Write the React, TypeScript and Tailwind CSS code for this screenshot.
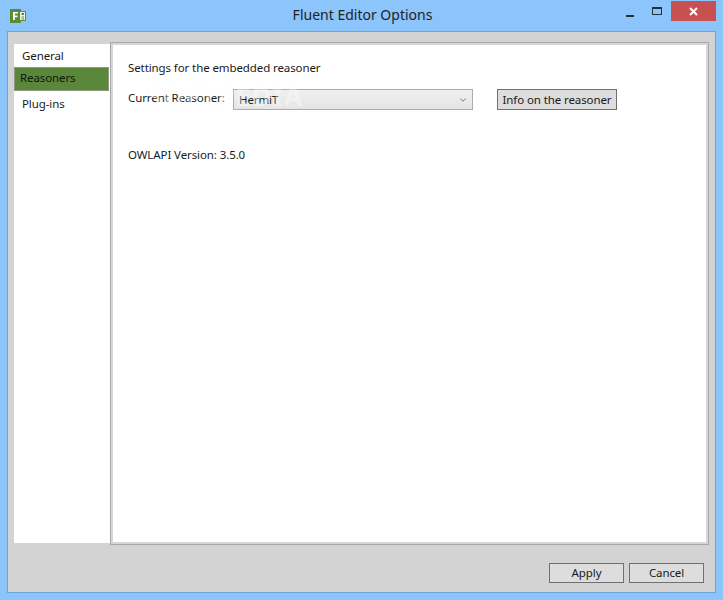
import { ChevronDown } from 'lucide-react';

const sections = ['General', 'Reasoners', 'Plug-ins'];

function FluentIcon() {
  return (
    <svg width="16" height="14" viewBox="0 0 16 14">
      <rect x="0" y="0" width="11" height="14" fill="#5b8a3a" />
      <rect x="9.5" y="2.5" width="6" height="9" fill="#eef3e8" stroke="#5b8a3a" />
      <path d="M3 3h5v1.6H4.8v2H7.5v1.6H4.8V11H3z" fill="#fff" />
      <rect x="11.5" y="4" width="2.5" height="2" fill="#5b8a3a" />
      <rect x="11.5" y="7.5" width="2.5" height="1" fill="#5b8a3a" />
      <rect x="11.5" y="9.5" width="2.5" height="1" fill="#5b8a3a" />
    </svg>
  );
}

function WindowControls() {
  return (
    <div className="flex items-start">
      <div className="flex h-[21px] w-[26px] items-end justify-center pb-[5px]">
        <div className="h-[2px] w-[8px] bg-[#26303a]" />
      </div>
      <div className="ml-[1px] flex h-[21px] w-[26px] items-start justify-center pt-[6px]">
        <div className="h-[8px] w-[10px] border border-t-2 border-[#26303a]" />
      </div>
      <div className="ml-[1px] flex h-[20px] w-[45px] items-center justify-center bg-[#c75050]">
        <svg width="9" height="9" viewBox="0 0 9 9">
          <path d="M1 1l7 7M8 1L1 8" stroke="#fff" strokeWidth="2" />
        </svg>
      </div>
    </div>
  );
}

export default function App() {
  return (
    <div className="flex h-[600px] w-[723px] flex-col overflow-hidden bg-[#8cc5fb] font-['Noto_Sans',sans-serif] text-[11.5px] tracking-[-0.1px] text-[#1a1a1a]">
      {/* Title bar */}
      <div className="flex h-[31px] shrink-0 items-start pl-[10px] pr-[7px]">
        <div className="mt-[9px]">
          <FluentIcon />
        </div>
        <div className="mt-[5px] flex-1 pl-[82px] text-center text-[14px] leading-[20px] tracking-normal text-[#222]">
          Fluent Editor Options
        </div>
        <div className="mt-[1px]">
          <WindowControls />
        </div>
      </div>

      {/* Client area */}
      <div className="mx-[7px] mb-[7px] flex min-h-0 flex-1 flex-col border border-[#6fa3d8] bg-[#d3d3d3] px-[6px] pt-[10px]">
        <div className="flex h-[503px] shrink-0">
          {/* Sidebar */}
          <div className="my-[2px] flex w-[96px] flex-col bg-white pr-[1px] pt-[2px]">
            {sections.map((name) =>
              name === 'Reasoners' ? (
                <div
                  key={name}
                  className="mb-[3px] mt-[-1px] h-[24px] border border-[#8a9a80] bg-[#5a873a] pl-[5px] leading-[20px] text-[#10180a]"
                >
                  {name}
                </div>
              ) : (
                <div key={name} className="mb-[2px] h-[20px] pl-[8px] leading-[20px]">
                  {name}
                </div>
              )
            )}
          </div>

          {/* Panel */}
          <div className="relative flex-1 border border-[#a8a8a8]">
            <div className="h-full border-2 border-[#d6d6d6] bg-white px-[15px] pt-[15px]">
              <div className="leading-[16px]">Settings for the embedded reasoner</div>
              <div className="mt-[13px] flex items-start">
                <span className="mt-[1px] w-[105px] leading-[16px]">Current Reasoner:</span>
                <div className="flex h-[21px] w-[240px] items-center justify-between border border-[#acacac] bg-gradient-to-b from-[#f0f0f0] to-[#e5e5e5] pl-[5px] pr-[4px]">
                  <span>HermiT</span>
                  <ChevronDown className="h-[10px] w-[10px] text-[#606060]" strokeWidth={2} />
                </div>
                <button className="ml-[24px] h-[21px] w-[120px] border border-[#707070] bg-[#dddddd] text-center leading-[19px]">
                  Info on the reasoner
                </button>
              </div>
              <div className="mt-[37px] leading-[16px]">OWLAPI Version: 3.5.0</div>
            </div>
            <div className="pointer-events-none absolute left-[36px] top-[38px] select-none text-[27px] font-bold leading-[30px] tracking-[1px] text-white opacity-35 [text-shadow:0_0_1px_#e8e8e8]">
              SOFTPEDIA
            </div>
          </div>
        </div>

        {/* Footer */}
        <div className="mt-[18px] flex justify-end gap-[5px] pr-[5px]">
          <button className="h-[20px] w-[75px] border border-[#707070] bg-[#dddddd] text-center leading-[18px]">
            Apply
          </button>
          <button className="h-[20px] w-[75px] border border-[#707070] bg-[#dddddd] text-center leading-[18px]">
            Cancel
          </button>
        </div>
      </div>
    </div>
  );
}
